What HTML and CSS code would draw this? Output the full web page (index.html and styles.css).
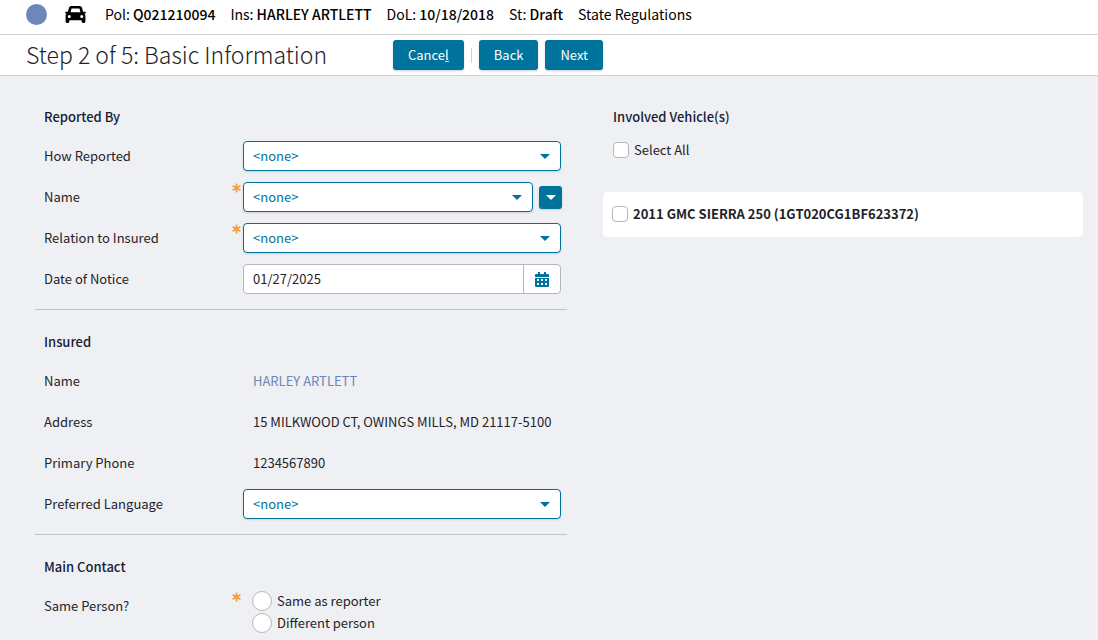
FILE: index.html
```html
<!DOCTYPE html>
<html lang="en">
<head>
    <meta charset="UTF-8">
    <meta name="viewport" content="width=device-width, initial-scale=1.0">
    <title>Step 2 of 5: Basic Information</title>
    <link rel="stylesheet" href="styles.css">
</head>
<body>
    <!-- Shared icons -->
    <svg class="sprite" aria-hidden="true">
        <symbol id="icon-required" viewBox="0 0 9 10">
            <path d="M4.500 0.500V9.500M0.600 2.800L8.400 7.200M8.400 2.800L0.600 7.200" fill="none" stroke="currentColor" stroke-width="1.700"/>
        </symbol>
    </svg>

    <!-- Claim info bar -->
    <header class="info-bar">
        <div class="info-icons">
            <span class="status-dot"></span>
            <svg class="car-icon" viewBox="0 0 22 18" aria-hidden="true">
                <path fill="currentColor" fill-rule="evenodd" d="M6.500 0H15.500Q17.500 0 18 2L19 6H21Q22 6 22 7Q22 8 21 8H20.500Q21.500 9 21.500 10.500V16.500Q21.500 18 20 18H19Q17.500 18 17.500 16.500V15H4.500V16.500Q4.500 18 3 18H2Q0.500 18 0.500 16.500V10.500Q0.500 9 1.500 8H1Q0 8 0 7Q0 6 1 6H3L4 2Q4.500 0 6.500 0ZM6.800 2.600L5.800 6.600H16.200L15.200 2.600ZM6 11A1.600 1.600 0 1 0 2.800 11A1.600 1.600 0 1 0 6 11ZM19.200 11A1.600 1.600 0 1 0 16 11A1.600 1.600 0 1 0 19.200 11Z"/>
            </svg>
        </div>
        <span>Pol: <strong>Q021210094</strong></span>
        <span>Ins: <strong>HARLEY ARTLETT</strong></span>
        <span>DoL: <strong>10/18/2018</strong></span>
        <span>St: <strong>Draft</strong></span>
        <span>State Regulations</span>
    </header>

    <!-- Wizard title and buttons -->
    <div class="title-bar">
        <h1>Step 2 of 5: Basic Information</h1>
        <div class="toolbar">
            <button type="button" class="btn">Cance<u>l</u></button>
            <span class="separator"></span>
            <button type="button" class="btn">Back</button>
            <button type="button" class="btn">Next</button>
        </div>
    </div>

    <main class="content">
        <form class="form-column">
            <!-- Reported By -->
            <section class="section">
                <h2>Reported By</h2>
                <div class="row">
                    <label for="how-reported">How Reported</label>
                    <div class="select-box">
                        <select id="how-reported"><option>&lt;none&gt;</option></select>
                    </div>
                </div>
                <div class="row">
                    <label for="reporter-name">Name <svg class="required"><use href="#icon-required"/></svg></label>
                    <div class="select-group">
                        <div class="select-box">
                            <select id="reporter-name"><option>&lt;none&gt;</option></select>
                        </div>
                        <button type="button" class="menu-btn" aria-label="Name options"></button>
                    </div>
                </div>
                <div class="row">
                    <label for="relation">Relation to Insured <svg class="required"><use href="#icon-required"/></svg></label>
                    <div class="select-box">
                        <select id="relation"><option>&lt;none&gt;</option></select>
                    </div>
                </div>
                <div class="row">
                    <label for="notice-date">Date of Notice</label>
                    <div class="date-box">
                        <input type="text" id="notice-date" value="01/27/2025">
                        <button type="button" class="date-btn" aria-label="Choose date">
                            <svg class="calendar-icon" viewBox="0 0 14 15" aria-hidden="true">
                                <path fill="currentColor" fill-rule="evenodd" d="M3 0H5V2H9V0H11V2H13Q14 2 14 3V5H0V3Q0 2 1 2H3ZM0 6H14V14Q14 15 13 15H1Q0 15 0 14ZM2 7V9H4V7ZM6 7V9H8V7ZM10 7V9H12V7ZM2 11V13H4V11ZM6 11V13H8V11ZM10 11V13H12V11Z"/>
                            </svg>
                        </button>
                    </div>
                </div>
            </section>

            <!-- Insured -->
            <section class="section">
                <h2>Insured</h2>
                <div class="row">
                    <span class="caption">Name</span>
                    <a class="value" href="#">HARLEY ARTLETT</a>
                </div>
                <div class="row">
                    <span class="caption">Address</span>
                    <span class="value">15 MILKWOOD CT, OWINGS MILLS, MD 21117-5100</span>
                </div>
                <div class="row">
                    <span class="caption">Primary Phone</span>
                    <span class="value">1234567890</span>
                </div>
                <div class="row">
                    <label for="language">Preferred Language</label>
                    <div class="select-box">
                        <select id="language"><option>&lt;none&gt;</option></select>
                    </div>
                </div>
            </section>

            <!-- Main Contact -->
            <section class="section">
                <h2>Main Contact</h2>
                <div class="row" role="radiogroup" aria-labelledby="same-person">
                    <span class="caption" id="same-person">Same Person? <svg class="required"><use href="#icon-required"/></svg></span>
                    <div class="radios">
                        <label class="choice"><input type="radio" name="contact">Same as reporter</label>
                        <label class="choice"><input type="radio" name="contact">Different person</label>
                    </div>
                </div>
            </section>
        </form>

        <!-- Involved vehicles -->
        <section class="vehicles">
            <h2>Involved Vehicle(s)</h2>
            <label class="choice select-all"><input type="checkbox">Select All</label>
            <div class="vehicle-card">
                <label class="choice"><input type="checkbox">2011 GMC SIERRA 250 (1GT020CG1BF623372)</label>
            </div>
        </section>
    </main>
</body>
</html>
```
FILE: styles.css
```css
* {
    box-sizing: border-box;
}
body {
    margin: 0;
    background-color: #eff0f4;
    color: #1f2328;
    font-family: "Noto Sans CJK SC", "Open Sans", sans-serif;
    font-size: 13px;
    line-height: 20px;
}
.sprite {
    display: none;
}
button, input, select {
    font: inherit;
    margin: 0;
}
h2 {
    margin: 0 0 8px;
    color: #161d33;
    font-size: 13px;
    font-weight: 500;
    line-height: 20px;
}

/* Info bar */
.info-bar {
    display: flex;
    align-items: center;
    gap: 15px;
    height: 35px;
    padding: 0 26px 6px;
    border-bottom: 1px solid #d2d2d2;
    background-color: #fff;
    color: #000;
    font-size: 14px;
    white-space: nowrap;
}
.info-bar strong {
    font-weight: 500;
}
.info-icons {
    display: flex;
    align-items: center;
    gap: 18px;
    margin-right: 4px;
}
.status-dot {
    width: 21px;
    height: 21px;
    border-radius: 50%;
    background-color: #6d87b9;
}
.car-icon {
    width: 21px;
    height: 17px;
}

/* Title bar */
.title-bar {
    display: flex;
    align-items: center;
    height: 41px;
    padding: 0 26px;
    border-bottom: 1px solid #d2d2d2;
    background-color: #fff;
}
h1 {
    flex: 0 0 367px;
    margin: 0;
    padding-bottom: 2px;
    font-size: 23px;
    font-weight: 200;
    line-height: 32px;
    white-space: nowrap;
}
.toolbar {
    display: flex;
    align-items: center;
    gap: 7px;
}
.btn {
    height: 30px;
    padding: 0 15px;
    border: none;
    border-radius: 3px;
    background-color: #00739d;
    color: #fff;
    box-shadow: 0 1px 2px rgba(0, 0, 0, 0.2);
    cursor: pointer;
}
.separator {
    width: 1px;
    height: 15px;
    background-color: #d2d2d2;
}

/* Page columns */
.content {
    display: grid;
    grid-template-columns: 532fr 480fr;
    gap: 36px;
    padding: 9px 15px 0 35px;
}
.section {
    padding: 22px 6px 10px 9px;
    border-bottom: 1px solid #c3c4c7;
}
.section:last-child {
    border-bottom: none;
}
.row {
    display: grid;
    grid-template-columns: 199px 1fr;
    padding: 6px 0 5px;
}
.row > label, .caption {
    display: flex;
    justify-content: space-between;
    height: 30px;
    padding-right: 2px;
    line-height: 30px;
}
.required {
    width: 9px;
    height: 10px;
    margin-top: 1px;
    color: #f0a040;
}
.value {
    padding-left: 10px;
    line-height: 30px;
    white-space: nowrap;
}
a.value {
    color: #6d87b9;
    text-decoration: none;
}

/* Fields */
.select-box {
    position: relative;
    flex: 1;
}
.select-box::after, .menu-btn::after {
    content: "";
    border: 5px solid transparent;
    border-top-color: #00739d;
    border-bottom: none;
}
.select-box::after {
    position: absolute;
    top: 13px;
    right: 11px;
    pointer-events: none;
}
select {
    display: block;
    width: 100%;
    height: 30px;
    padding: 0 30px 0 9px;
    border: 1px solid #00739d;
    border-radius: 4px;
    background-color: #fff;
    color: #00739d;
    box-shadow: 0 1px 2px rgba(0, 0, 0, 0.15);
    appearance: none;
}
.select-group {
    display: flex;
    align-items: center;
    gap: 6px;
    margin-right: -1px;
}
.menu-btn {
    display: flex;
    align-items: center;
    justify-content: center;
    width: 23px;
    height: 23px;
    padding: 0;
    border: none;
    border-radius: 3px;
    background-color: #00739d;
    box-shadow: 0 1px 2px rgba(0, 0, 0, 0.15);
}
.menu-btn::after {
    border-top-color: #fff;
}
.date-box {
    display: flex;
    height: 30px;
    border: 1px solid #b4b6ba;
    border-radius: 4px;
    background-color: #fff;
}
.date-box input {
    flex: 1;
    min-width: 0;
    padding: 0 9px;
    border: none;
    background: none;
    color: inherit;
}
.date-btn {
    display: flex;
    align-items: center;
    justify-content: center;
    width: 37px;
    padding: 0;
    border: none;
    border-left: 1px solid #b4b6ba;
    background: none;
    color: #00739d;
}
.calendar-icon {
    width: 14px;
    height: 15px;
}

/* Radios and checkboxes */
.choice {
    display: flex;
    align-items: center;
    gap: 5px;
}
.choice input {
    flex: none;
    width: 16px;
    height: 16px;
    border: 1px solid #b4b6ba;
    border-radius: 4px;
    background-color: #fff;
    appearance: none;
}
.choice input[type="radio"] {
    width: 20px;
    height: 20px;
    border-radius: 50%;
}
.choice input:checked {
    background-color: #00739d;
}
.radios {
    display: grid;
    gap: 2px;
    padding-left: 9px;
}

/* Vehicles */
.vehicles {
    padding-top: 22px;
}
.vehicles h2, .select-all {
    margin-left: 10px;
}
.select-all {
    padding: 5px 0;
}
.vehicle-card {
    margin-top: 27px;
    padding: 12px 9px 13px;
    border-radius: 4px;
    background-color: #fff;
    font-weight: 700;
}
```
